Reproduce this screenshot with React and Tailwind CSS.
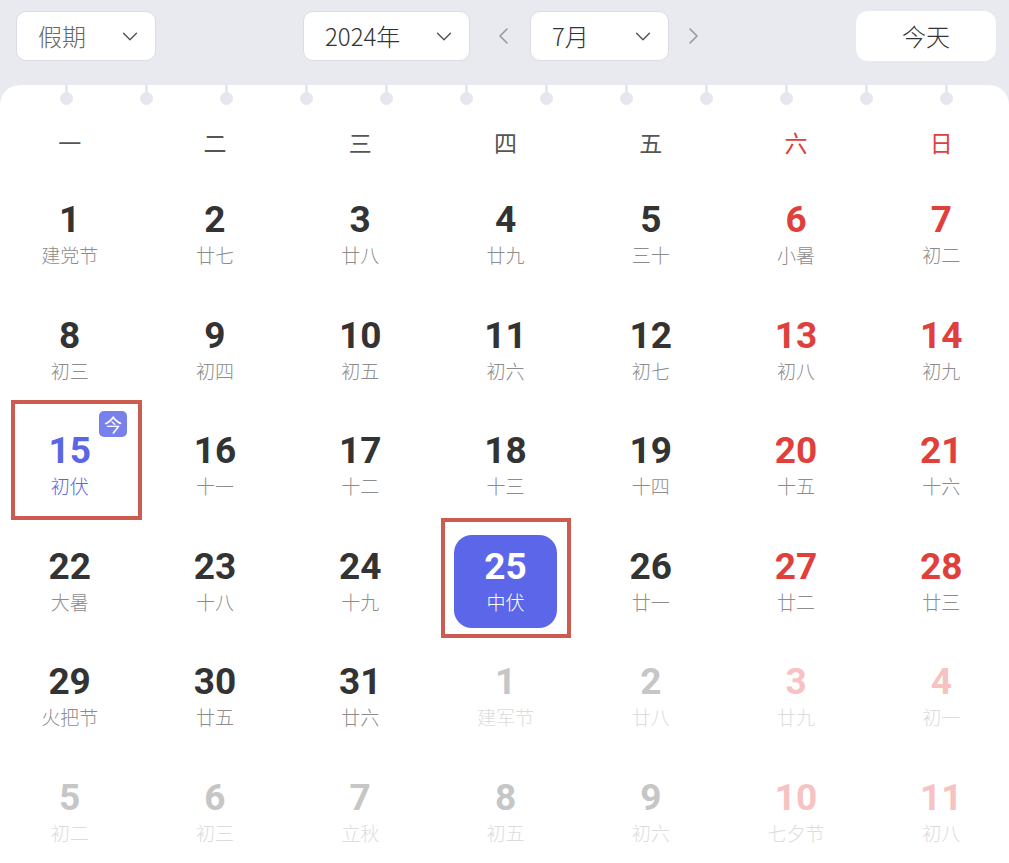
import React from 'react';

const weekdays = ['一', '二', '三', '四', '五', '六', '日'];

const days = [
  [1, '建党节'], [2, '廿七'], [3, '廿八'], [4, '廿九'], [5, '三十'], [6, '小暑'], [7, '初二'],
  [8, '初三'], [9, '初四'], [10, '初五'], [11, '初六'], [12, '初七'], [13, '初八'], [14, '初九'],
  [15, '初伏'], [16, '十一'], [17, '十二'], [18, '十三'], [19, '十四'], [20, '十五'], [21, '十六'],
  [22, '大暑'], [23, '十八'], [24, '十九'], [25, '中伏'], [26, '廿一'], [27, '廿二'], [28, '廿三'],
  [29, '火把节'], [30, '廿五'], [31, '廿六'], [1, '建军节', true], [2, '廿八', true], [3, '廿九', true], [4, '初一', true],
  [5, '初二', true], [6, '初三', true], [7, '立秋', true], [8, '初五', true], [9, '初六', true], [10, '七夕节', true], [11, '初八', true],
];

const Chevron = ({ dir = 'down', className = '' }) => {
  const d = {
    down: 'M5 9l7 7 7-7',
    left: 'M15 5l-7 7 7 7',
    right: 'M9 5l7 7-7 7',
  }[dir];
  return (
    <svg viewBox="0 0 24 24" className={className} fill="none" stroke="currentColor" strokeWidth="1.6" strokeLinecap="round" strokeLinejoin="round">
      <path d={d} />
    </svg>
  );
};

const Select = ({ label, width, muted }) => (
  <div className={`h-[50px] ${width} bg-white border border-[#dcdde3] rounded-[10px] flex items-center justify-between pl-[21px] pr-[14px]`}>
    <span className={`text-[24px] font-light ${muted ? 'text-[#666]' : 'text-[#333]'}`}>{label}</span>
    <Chevron className="w-[22px] h-[22px] text-[#555]" />
  </div>
);

const DayCell = ({ num, lunar, idx, out }) => {
  const weekend = idx % 7 >= 5;
  const isToday = !out && num === 15;
  const isSel = !out && num === 25;

  let numColor = 'text-[#333]';
  let lunarColor = 'text-[#8c8c8c]';
  if (weekend) numColor = 'text-[#e0403c]';
  if (out) {
    numColor = weekend ? 'text-[#f6c3c2]' : 'text-[#c6c6c6]';
    lunarColor = 'text-[#dcdcdc]';
  }
  if (isToday) {
    numColor = 'text-[#5b66e6]';
    lunarColor = 'text-[#5b66e6]';
  }
  if (isSel) {
    numColor = 'text-white';
    lunarColor = 'text-white';
  }

  return (
    <div className="relative h-[115.5px] flex items-center justify-center pb-[4px]">
      <div className={`flex flex-col items-center justify-center ${isSel ? 'w-[103px] h-[93px] rounded-[18px] bg-[#5b67e8]' : ''}`}>
        <span className={`font-['Roboto'] font-bold text-[37px] leading-[34px] ${numColor}`}>{num}</span>
        <span className={`text-[19px] font-light leading-[22px] mt-[7px] ${lunarColor}`}>{lunar}</span>
      </div>
      {isToday && (
        <>
          <div className="absolute left-[14px] top-[-10px] w-[131px] h-[120px] border-[4px] border-[#cd5c50]" />
          <div className="absolute left-[102px] top-[1px] w-[28px] h-[26px] rounded-[5px] bg-[#7880ec] text-white text-[18px] leading-[26px] text-center">今</div>
        </>
      )}
      {isSel && (
        <div className="absolute left-[8px] top-[-8px] w-[130px] h-[120px] border-[4px] border-[#cd5c50]" />
      )}
    </div>
  );
};

export default function App() {
  return (
    <div className="w-[1009px] h-[863px] overflow-hidden bg-[#e9eaf0] font-['Noto_Sans_CJK_SC','Noto_Sans',sans-serif]">
      {/* toolbar */}
      <div className="h-[85px] flex items-start pt-[11px] pl-[16px] pr-[13px]">
        <Select label="假期" width="w-[140px]" muted />
        <div className="ml-[147px] flex items-center">
          <Select label="2024年" width="w-[167px]" />
          <Chevron dir="left" className="w-[24px] h-[24px] text-[#999] ml-[22px]" />
          <div className="ml-[14px]">
            <Select label="7月" width="w-[139px]" />
          </div>
          <Chevron dir="right" className="w-[24px] h-[24px] text-[#999] ml-[12px]" />
        </div>
        <div className="ml-auto h-[50px] w-[140px] bg-white rounded-[12px] flex items-center justify-center text-[24px] font-light text-[#333]">今天</div>
      </div>

      {/* calendar card */}
      <div className="bg-white rounded-t-[20px] h-[800px]">
        <div className="flex pl-[59px] gap-[66px] h-[21px]">
          {Array.from({ length: 12 }).map((_, i) => (
            <div key={i} className="w-[14px] flex flex-col items-center">
              <div className="w-[3px] h-[8px] bg-[#e6e7ee]" />
              <div className="w-[13px] h-[13px] -mt-[1px] rounded-full bg-[#e6e7ee]" />
            </div>
          ))}
        </div>
        <div className="w-[1017px] -ml-[3px]">
          <div className="grid grid-cols-7 h-[73px] items-center">
            {weekdays.map((w, i) => (
              <div key={w} className={`text-center text-[23px] ${i >= 5 ? 'text-[#e0403c]' : 'text-[#555]'}`}>{w}</div>
            ))}
          </div>
          <div className="grid grid-cols-7">
            {days.map(([n, l, out], i) => (
              <DayCell key={i} num={n} lunar={l} idx={i} out={!!out} />
            ))}
          </div>
        </div>
      </div>
    </div>
  );
}
